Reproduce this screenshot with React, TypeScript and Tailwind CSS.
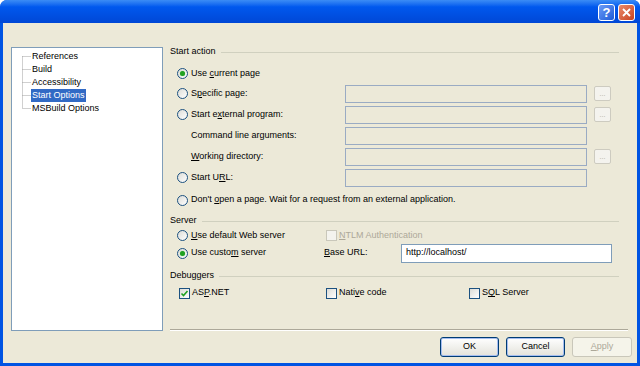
import type { ReactNode } from 'react'

const U = ({ children }: { children: ReactNode }) => <span className="underline">{children}</span>

function Radio({ checked }: { checked?: boolean }) {
  return (
    <span className="w-[11px] h-[11px] rounded-full border border-[#1c5180] bg-gradient-to-br from-[#dcdcd7] to-white flex items-center justify-center shrink-0">
      {checked && <span className="w-[5px] h-[5px] rounded-full bg-[#21a121] shadow-[0_0_1px_#6fd66f]" />}
    </span>
  )
}

function Check({ checked, disabled }: { checked?: boolean; disabled?: boolean }) {
  return (
    <span
      className={
        disabled
          ? 'w-[11px] h-[11px] border border-[#c9c7ba] bg-[#f4f3ee] shrink-0'
          : 'w-[11px] h-[11px] border border-[#1c5180] bg-gradient-to-br from-[#dcdcd7] to-white shrink-0 flex items-center justify-center'
      }
    >
      {checked && (
        <svg width="9" height="9" viewBox="0 0 9 9">
          <path d="M1.5 4.5 L3.5 6.5 L7.5 2" fill="none" stroke="#21a121" strokeWidth="1.6" />
        </svg>
      )}
    </span>
  )
}

function Box({ w = 'w-[242px]' }: { w?: string }) {
  return <span className={`${w} h-[18px] border border-[#9aabc3] shrink-0`} />
}

function Browse() {
  return (
    <span className="ml-[7px] w-[17px] h-[15px] rounded-[2px] border border-[#cdcbc0] bg-[#f4f3ee] flex items-end justify-center pb-[3px] text-[7px] leading-none text-[#aca899]">
      ...
    </span>
  )
}

function Header({ label }: { label: string }) {
  return (
    <div className="flex items-center h-[14px] mr-[9px]">
      <span>{label}</span>
      <span className="flex-1 ml-[5px] h-px bg-[#d0d0bf]" />
    </div>
  )
}

const treeItems = ['References', 'Build', 'Accessibility', 'Start Options', 'MSBuild Options']

export default function App() {
  return (
    <div className="w-[640px] h-[366px] flex flex-col bg-[#0054e3] rounded-t-[7px] overflow-hidden font-['Liberation_Sans',Arial,sans-serif] text-[9px] text-black">
      {/* title bar */}
      <div className="h-[23px] shrink-0 flex items-start justify-end pr-[5px] pt-[4px] gap-[3px] bg-gradient-to-b from-[#3b8cf5] via-[#0058ee] via-30% to-[#0047d6]">
        <span className="w-[17px] h-[17px] rounded-[3px] border border-white bg-gradient-to-br from-[#6b9bf7] to-[#1d5ad6] flex items-center justify-center text-white font-bold text-[13px] leading-none">
          ?
        </span>
        <span className="w-[17px] h-[17px] rounded-[3px] border border-white bg-gradient-to-br from-[#ea8a6a] to-[#c8401c] flex items-center justify-center">
          <svg width="9" height="9" viewBox="0 0 9 9">
            <path d="M1 1 L8 8 M8 1 L1 8" stroke="white" strokeWidth="1.8" />
          </svg>
        </span>
      </div>

      {/* body */}
      <div className="flex-1 mx-[3px] mb-[3px] bg-[#ece9d8] flex flex-col pt-[22px] pb-[6px]">
        <div className="flex h-[286px]">
          {/* tree */}
          <div className="ml-[8px] mt-[2px] w-[152px] h-[284px] bg-white border border-[#7f9db9] pl-[10px] pt-[2px] flex items-start">
            <svg width="9" height="65" className="shrink-0">
              <path
                d="M0.5 6.5 V58.5 M0.5 6.5 H9 M0.5 19.5 H9 M0.5 32.5 H9 M0.5 45.5 H9 M0.5 58.5 H9"
                stroke="#a0a0a0"
                strokeDasharray="1 1"
                fill="none"
              />
            </svg>
            <div className="flex flex-col">
              {treeItems.map((t) => (
                <div key={t} className="h-[13px] flex items-center">
                  <span className={t === 'Start Options' ? 'px-[1px] bg-[#316ac5] text-white' : 'px-[1px]'}>{t}</span>
                </div>
              ))}
            </div>
          </div>

          {/* options */}
          <div className="ml-[7px] w-[458px] flex flex-col">
            <Header label="Start action" />
            <div className="mt-[5px] h-[19px] flex items-center pl-[7px] gap-[3px]">
              <Radio checked />
              <span>Use <U>c</U>urrent page</span>
            </div>
            <div className="h-[21px] flex items-center">
              <div className="w-[175px] pl-[7px] flex items-center gap-[3px]">
                <Radio />
                <span>S<U>p</U>ecific page:</span>
              </div>
              <Box />
              <Browse />
            </div>
            <div className="h-[21px] flex items-center">
              <div className="w-[175px] pl-[7px] flex items-center gap-[3px]">
                <Radio />
                <span>Start e<U>x</U>ternal program:</span>
              </div>
              <Box />
              <Browse />
            </div>
            <div className="h-[21px] flex items-center">
              <div className="w-[175px] pl-[21px]">Command line arguments:</div>
              <Box />
            </div>
            <div className="h-[21px] flex items-center">
              <div className="w-[175px] pl-[21px]">
                <U>W</U>orking directory:
              </div>
              <Box />
              <Browse />
            </div>
            <div className="h-[21px] flex items-center">
              <div className="w-[175px] pl-[7px] flex items-center gap-[3px]">
                <Radio />
                <span>Start U<U>R</U>L:</span>
              </div>
              <Box />
            </div>
            <div className="h-[24px] flex items-center pl-[7px] gap-[3px]">
              <Radio />
              <span>Don't <U>o</U>pen a page. Wait for a request from an external application.</span>
            </div>

            <div className="mt-[2px]">
              <Header label="Server" />
            </div>
            <div className="h-[15px] flex items-center">
              <div className="w-[156px] pl-[7px] flex items-center gap-[3px]">
                <Radio />
                <span><U>U</U>se default Web server</span>
              </div>
              <Check disabled />
              <span className="ml-[2px] text-[#aca899]"><U>N</U>TLM Authentication</span>
            </div>
            <div className="h-[20px] flex items-center">
              <div className="w-[154px] pl-[7px] flex items-center gap-[3px]">
                <Radio checked />
                <span>Use custo<U>m</U> server</span>
              </div>
              <span className="w-[77px]"><U>B</U>ase URL:</span>
              <span className="w-[211px] h-[19px] bg-white border border-[#7f9db9] flex items-center pl-[4px]">http://localhost/</span>
            </div>

            <div className="mt-[6px]">
              <Header label="Debuggers" />
            </div>
            <div className="mt-[1px] h-[18px] flex items-center">
              <div className="w-[156px] pl-[9px] flex items-center gap-[2px]">
                <Check checked />
                <span>AS<U>P</U>.NET</span>
              </div>
              <div className="w-[143px] flex items-center gap-[2px]">
                <Check />
                <span>Nati<U>v</U>e code</span>
              </div>
              <div className="flex items-center gap-[2px]">
                <Check />
                <span>S<U>Q</U>L Server</span>
              </div>
            </div>

            <div className="mt-auto h-[2px] border-t border-[#aca899] border-b border-b-white" />
          </div>
        </div>

        {/* buttons */}
        <div className="mt-[6px] h-[20px] flex justify-end gap-[7px] pr-[5px]">
          <button className="w-[59px] h-[20px] rounded-[3px] border border-[#003c74] bg-gradient-to-b from-white to-[#e3e2da] shadow-[inset_0_0_0_1px_#a5bdf0] text-[9px]">
            OK
          </button>
          <button className="w-[59px] h-[20px] rounded-[3px] border border-[#003c74] bg-gradient-to-b from-white to-[#e3e2da] shadow-[inset_0_0_0_1px_#a5bdf0] text-[9px]">
            Cancel
          </button>
          <button className="w-[60px] h-[20px] rounded-[3px] border border-[#c9c7ba] bg-[#f5f4ea] text-[#aca899] text-[9px]">
            <U>A</U>pply
          </button>
        </div>
      </div>
    </div>
  )
}
